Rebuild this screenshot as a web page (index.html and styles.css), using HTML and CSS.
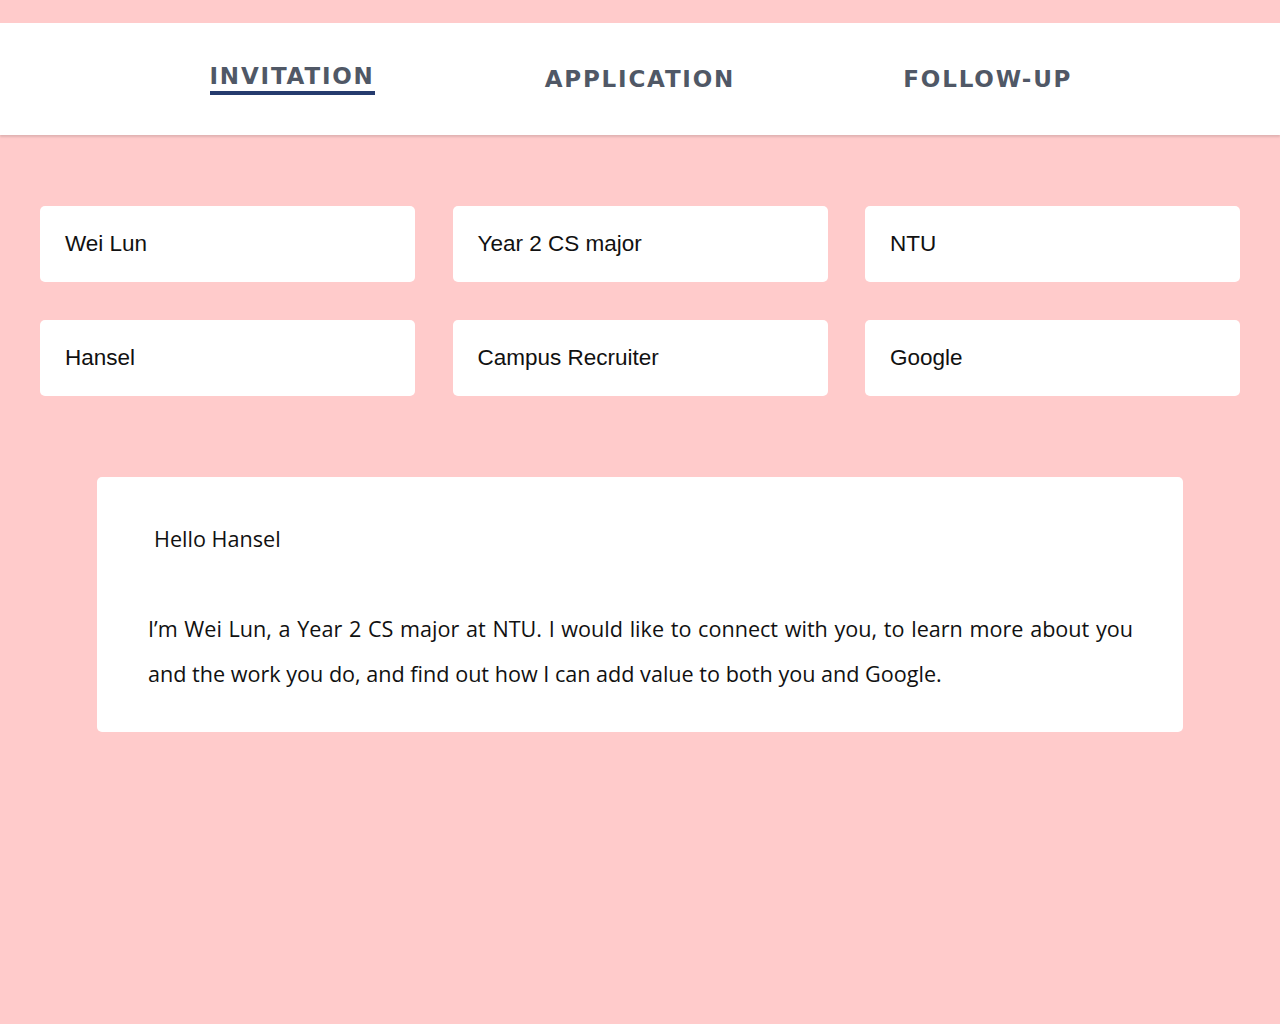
FILE: index.html
```html
<!DOCTYPE html>
<html lang="en">
<head>
<meta charset="utf-8">
<title>Invitation</title>
<link rel="stylesheet" href="styles.css">
</head>
<body>
<header class="topbar">
  <nav class="tabs">
    <a class="tab active" href="#">INVITATION</a>
    <a class="tab" href="#">APPLICATION</a>
    <a class="tab" href="#">FOLLOW-UP</a>
  </nav>
</header>
<main class="content">
  <section class="fields">
    <div class="field">Wei Lun</div>
    <div class="field">Year 2 CS major</div>
    <div class="field">NTU</div>
    <div class="field">Hansel</div>
    <div class="field">Campus Recruiter</div>
    <div class="field">Google</div>
  </section>
  <section class="message">
    <p class="greeting">Hello Hansel</p>
    <p class="body">I’m Wei Lun, a Year 2 CS major at NTU. I would like to connect with you, to learn more about you and the work you do, and find out how I can add value to both you and Google.</p>
  </section>
</main>
</body>
</html>
```
FILE: styles.css
```css
html, body {
  margin: 0;
  padding: 0;
}
body {
  background: #ffcbcb;
  min-height: 1024px;
  padding-top: 23px;
  box-sizing: border-box;
  font-family: "Liberation Sans", Arial, sans-serif;
}
.topbar {
  background: #ffffff;
  height: 112px;
  box-shadow: 0 2px 2px rgba(0, 0, 0, 0.12);
  display: flex;
  align-items: center;
  justify-content: center;
}
.tabs {
  display: flex;
  align-items: center;
  gap: 170px;
}
.tab {
  font-family: "DejaVu Sans", Verdana, sans-serif;
  font-weight: bold;
  font-size: 23px;
  letter-spacing: 1.8px;
  color: #505866;
  text-decoration: none;
  line-height: 27px;
  margin-right: -1.8px;
}
.tab.active {
  border-bottom: 4px solid #253b6e;
  padding-bottom: 1px;
  margin-right: 0;
}
.content {
  padding: 71px 40px 0;
}
.fields {
  display: grid;
  grid-template-columns: repeat(3, 1fr);
  column-gap: 37.5px;
  row-gap: 38px;
}
.field {
  background: #ffffff;
  border-radius: 5px;
  height: 76px;
  display: flex;
  align-items: center;
  padding: 0 25px;
  font-size: 22.5px;
  color: #111111;
}
.message {
  background: #ffffff;
  border-radius: 5px;
  margin: 81px 57px 0;
  padding: 39px 50px 36px 51px;
  font-family: "Open Sans", "Noto Sans", sans-serif;
  font-size: 21.6px;
  line-height: 45px;
  color: #111111;
}
.message p {
  margin: 0;
}
.body {
  text-align: justify;
}
.greeting {
  padding-left: 6px;
  margin-bottom: 45px !important;
}
```
